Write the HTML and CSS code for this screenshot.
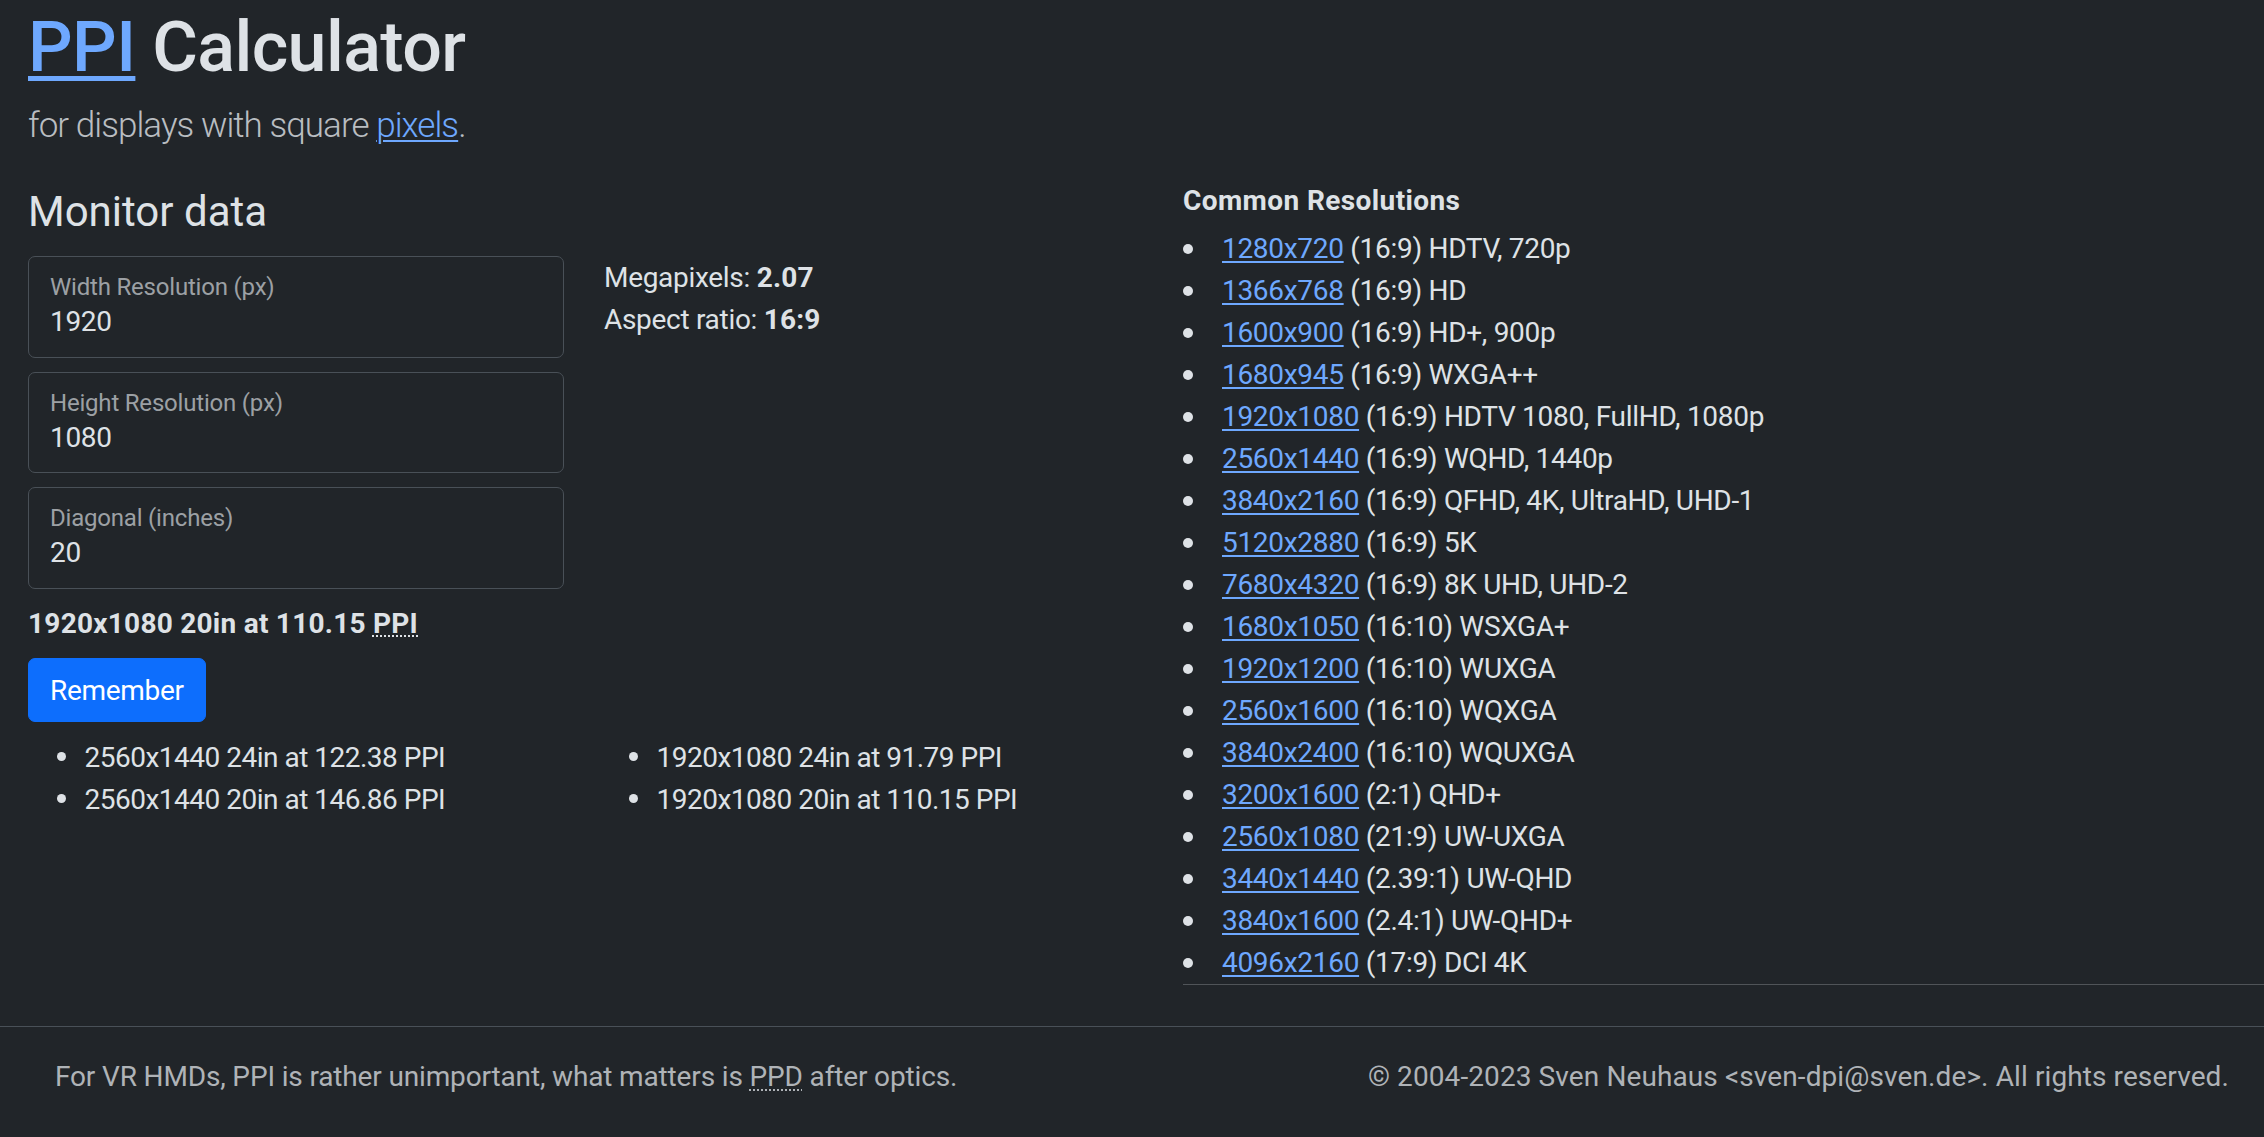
FILE: index.html
```html
<!DOCTYPE html>
<html lang="en">
<head>
<meta charset="utf-8">
<title>PPI Calculator</title>
<link rel="stylesheet" href="styles.css">
</head>
<body>
<div class="container">
  <h1 class="title"><a href="#">PPI</a> Calculator</h1>
  <p class="lead">for displays with square <a href="#">pixels</a>.</p>

  <div class="main">
    <section class="calc">
      <h4 class="section-title">Monitor data</h4>
      <div class="calc-row">
        <div class="inputs">
          <label class="field">
            <span class="field-label">Width Resolution (px)</span>
            <input class="field-input" type="text" value="1920">
          </label>
          <label class="field">
            <span class="field-label">Height Resolution (px)</span>
            <input class="field-input" type="text" value="1080">
          </label>
          <label class="field">
            <span class="field-label">Diagonal (inches)</span>
            <input class="field-input" type="text" value="20">
          </label>
          <p class="result">1920x1080 20in at 110.15 <abbr title="pixels per inch">PPI</abbr></p>
          <button class="btn" type="button">Remember</button>
        </div>
        <div class="stats">
          <div>Megapixels: <b>2.07</b></div>
          <div>Aspect ratio: <b>16:9</b></div>
        </div>
      </div>
      <div class="remember">
        <ul class="dot-list">
          <li>2560x1440 24in at 122.38 PPI</li>
          <li>2560x1440 20in at 146.86 PPI</li>
        </ul>
        <ul class="dot-list">
          <li>1920x1080 24in at 91.79 PPI</li>
          <li>1920x1080 20in at 110.15 PPI</li>
        </ul>
      </div>
    </section>

    <aside class="common">
      <h6 class="common-title">Common Resolutions</h6>
      <ul class="res-list">
        <li><a href="#">1280x720</a> (16:9) HDTV, 720p</li>
        <li><a href="#">1366x768</a> (16:9) HD</li>
        <li><a href="#">1600x900</a> (16:9) HD+, 900p</li>
        <li><a href="#">1680x945</a> (16:9) WXGA++</li>
        <li><a href="#">1920x1080</a> (16:9) HDTV 1080, FullHD, 1080p</li>
        <li><a href="#">2560x1440</a> (16:9) WQHD, 1440p</li>
        <li><a href="#">3840x2160</a> (16:9) QFHD, 4K, UltraHD, UHD-1</li>
        <li><a href="#">5120x2880</a> (16:9) 5K</li>
        <li><a href="#">7680x4320</a> (16:9) 8K UHD, UHD-2</li>
        <li><a href="#">1680x1050</a> (16:10) WSXGA+</li>
        <li><a href="#">1920x1200</a> (16:10) WUXGA</li>
        <li><a href="#">2560x1600</a> (16:10) WQXGA</li>
        <li><a href="#">3840x2400</a> (16:10) WQUXGA</li>
        <li><a href="#">3200x1600</a> (2:1) QHD+</li>
        <li><a href="#">2560x1080</a> (21:9) UW-UXGA</li>
        <li><a href="#">3440x1440</a> (2.39:1) UW-QHD</li>
        <li><a href="#">3840x1600</a> (2.4:1) UW-QHD+</li>
        <li><a href="#">4096x2160</a> (17:9) DCI 4K</li>
      </ul>
      <hr class="rule">
    </aside>
  </div>
</div>

<footer class="footer">
  <p class="footer-note">For VR HMDs, PPI is rather unimportant, what matters is <abbr title="pixels per degree">PPD</abbr> after optics.</p>
  <p class="footer-copy">© 2004-2023 Sven Neuhaus &lt;sven-dpi@sven.de&gt;. All rights reserved.</p>
</footer>
</body>
</html>
```
FILE: styles.css
```css
html, body {
  margin: 0;
  padding: 0;
}

body {
  background: #212529;
  color: #dee2e6;
  font-family: Roboto, "Liberation Sans", sans-serif;
  font-size: 28px;
  line-height: 42px;
  letter-spacing: -0.3px;
}

a {
  color: #6ea8fe;
  text-decoration: underline;
  text-decoration-thickness: 2px;
  text-underline-offset: 3px;
}

abbr {
  text-decoration: underline dotted;
  text-decoration-skip-ink: none;
  text-decoration-thickness: 2px;
  text-underline-offset: 3px;
  cursor: help;
}

.container {
  padding-left: 28px;
}

.title {
  margin: 5px 0 0;
  font-size: 70px;
  font-weight: 500;
  line-height: 84px;
  letter-spacing: -0.6px;
}

.title a {
  text-decoration-thickness: 5px;
  text-underline-offset: 5px;
}

.lead {
  margin: 10.5px 0 0;
  font-size: 35px;
  font-weight: 300;
  line-height: 52.5px;
  letter-spacing: -0.95px;
  color: #b9bdc1;
}

.lead a {
  text-decoration-thickness: 2px;
  text-underline-offset: 3px;
}

.main {
  display: grid;
  grid-template-columns: 1155px 1fr;
  margin-top: 32px;
}

.section-title {
  margin: 3.1px 0 18.6px;
  font-size: 42px;
  font-weight: 400;
  line-height: 50.4px;
  letter-spacing: 0;
}

.calc-row {
  display: grid;
  grid-template-columns: 572px 1fr;
}

.inputs {
  width: 536px;
}

.field {
  display: block;
  box-sizing: border-box;
  height: 101.5px;
  margin-bottom: 14px;
  padding: 15px 21px 0;
  border: 1px solid #495057;
  border-radius: 7px;
}

.field-label {
  display: block;
  font-size: 24px;
  line-height: 30px;
  letter-spacing: -0.2px;
  color: #9ca0a4;
  margin-bottom: 2px;
}

.field-input {
  display: block;
  width: 100%;
  height: 35px;
  margin: 0;
  padding: 0;
  border: 0;
  outline: none;
  background: transparent;
  color: #dee2e6;
  font: inherit;
  line-height: 35px;
  letter-spacing: -0.3px;
}

.result {
  margin: 13.5px 0 0;
  font-weight: 700;
  letter-spacing: 0.25px;
}

.btn {
  display: inline-block;
  margin-top: 13px;
  padding: 11px 21px 9px;
  border: 1px solid #0d6efd;
  border-radius: 7px;
  background: #0d6efd;
  color: #fff;
  font: inherit;
  line-height: 42px;
  letter-spacing: -0.3px;
  cursor: pointer;
}

.stats {
  padding-left: 4px;
  padding-top: 0.7px;
}

.stats b {
  font-weight: 700;
  letter-spacing: 0.2px;
}

.remember {
  display: grid;
  grid-template-columns: 572px 572px;
  margin-top: 15.4px;
}

.dot-list,
.res-list {
  list-style: none;
  margin: 0;
  padding: 0;
}

.dot-list li {
  letter-spacing: -0.5px;
}

.dot-list li::before,
.res-list li::before {
  content: "";
  display: inline-block;
  width: 9px;
  height: 9px;
  border-radius: 50%;
  background: #dee2e6;
  vertical-align: 5.5px;
}

.dot-list li::before {
  margin-left: 29px;
  margin-right: 18.5px;
}

.res-list li::before {
  width: 10px;
  height: 10px;
  vertical-align: 4px;
  margin-right: 29px;
}

.common-title {
  margin: 0 0 10.2px;
  font-size: 28px;
  font-weight: 700;
  line-height: 33.6px;
  letter-spacing: 0.4px;
}

.rule {
  margin: 0;
  border: 0;
  border-top: 1px solid #505458;
  height: 0;
}

.footer {
  display: flex;
  justify-content: space-between;
  margin-top: 41px;
  padding: 29.7px 35px 20px 55px;
  border-top: 1px solid #495057;
  color: #afb3b7;
}

.footer p {
  margin: 0;
}

.footer-note {
  letter-spacing: -0.15px;
}

.footer-copy {
  letter-spacing: 0.1px;
}
```
